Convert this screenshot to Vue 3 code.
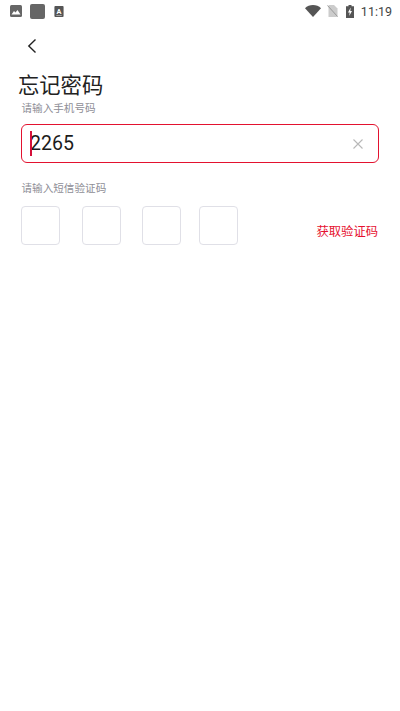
<script setup>
const boxes = [0, 1, 2, 3]
</script>

<template>
  <div class="page">
    <div class="status">
      <div class="status-left">
        <svg class="ic-img" viewBox="0 0 12 12"><rect width="12" height="12" rx="1.5" fill="#666"/><path d="M1.5 9.5 4 6l1.5 1.6L7.5 5l3 4.500z" fill="#fff"/></svg>
        <span class="ic-square"></span>
        <svg class="ic-a" viewBox="0 0 10 12"><rect width="10" height="12" rx="1" fill="#555"/><text x="5" y="8.500" text-anchor="middle" class="ic-a-text">A</text><rect x="2" y="10" width="6" height="0.800" fill="#bbb"/></svg>
      </div>
      <div class="status-right">
        <svg class="ic-wifi" viewBox="0 0 16 12"><path d="M0 3.200C2 1.200 5 0 8 0s6 1.200 8 3.200L8 12z" fill="#555"/></svg>
        <svg class="ic-sim" viewBox="0 0 10 12"><path d="M1 0h5.500L10 3.500V12H1z" fill="#ccc"/><path d="M0 .5 10 11.500" stroke="#999" stroke-width="1"/></svg>
        <svg class="ic-batt" viewBox="0 0 8 13"><path d="M2.500 0h3v1.300H8V13H0V1.300h2.500z" fill="#555"/><path d="M4.700 2.500 2 7.500h1.700L3.200 11 6 6H4.300z" fill="#fff"/></svg>
        <span class="clock">11:19</span>
      </div>
    </div>

    <div class="nav">
      <svg class="back" viewBox="0 0 10 16"><path d="M8.500 1.500 1.800 8l6.700 6.500" fill="none" stroke="#222" stroke-width="1.400"/></svg>
    </div>

    <h1 class="title">忘记密码</h1>
    <div class="label first">请输入手机号码</div>

    <div class="input">
      <span class="caret"></span>
      <span class="value">2265</span>
      <svg class="clear" viewBox="0 0 10 10"><path d="M.5.5l9 9M9.500.5l-9 9" stroke="#b8b8b8" stroke-width="1.100" fill="none"/></svg>
    </div>

    <div class="label second">请输入短信验证码</div>

    <div class="code-row">
      <div class="boxes">
        <span v-for="b in boxes" :key="b" class="box"></span>
      </div>
      <span class="get-code">获取验证码</span>
    </div>
  </div>
</template>

<style scoped>
.page {
  width: 400px;
  height: 711px;
  background: #fff;
  overflow: hidden;
  font-family: "Roboto", "Noto Sans CJK SC", sans-serif;
  box-sizing: border-box;
}
.status {
  height: 22px;
  display: flex;
  align-items: center;
  justify-content: space-between;
  padding: 0 8px 0 10px;
}
.status-left, .status-right {
  display: flex;
  align-items: center;
}
.ic-img { width: 12px; height: 12px; }
.ic-square {
  width: 15px;
  height: 15px;
  border-radius: 2px;
  background: #666;
  margin-left: 8px;
}
.ic-a { width: 10px; height: 11px; margin-left: 9px; }
.ic-a-text { font-size: 8px; font-weight: 700; fill: #fff; font-family: "Roboto", sans-serif; }
.ic-wifi { width: 16px; height: 12px; }
.ic-sim { width: 11px; height: 12px; margin-left: 6px; }
.ic-batt { width: 8px; height: 13px; margin-left: 8px; }
.clock { font-size: 12.5px; color: #444; margin-left: 7px; }
.nav {
  height: 48px;
  padding-left: 27px;
  display: flex;
  align-items: center;
}
.back { width: 10px; height: 16px; }
.title {
  margin: 0 0 0 18px;
  font-size: 21.3px;
  line-height: 32px;
  font-weight: 400;
  color: #222;
}
.label {
  margin-left: 21.5px;
  font-size: 10.6px;
  line-height: 14px;
  color: #8e8e96;
}
.first { margin-top: 0; }
.input {
  margin: 8px 21px 0;
  height: 39px;
  box-sizing: border-box;
  border: 1px solid #e3122f;
  border-radius: 6px;
  display: flex;
  align-items: center;
  padding: 0 15px 0 8px;
  position: relative;
}
.caret {
  width: 2px;
  height: 25px;
  background: #d5103a;
  position: absolute;
  left: 8px;
  top: 6px;
}
.value {
  font-size: 19.500px;
  color: #1c1c1c;
  flex: 1;
}
.clear { width: 10px; height: 10px; }
.second { margin-top: 19px; }
.code-row {
  margin: 10px 21px 0;
  display: flex;
  justify-content: space-between;
  align-items: center;
}
.boxes { display: flex; }
.box {
  width: 39px;
  height: 39px;
  box-sizing: border-box;
  border: 1px solid #e0e0e7;
  border-radius: 4px;
  margin-right: 22px;
}
.box:nth-child(2) { margin-right: 21px; }
.box:nth-child(3) { margin-right: 18px; }
.box:last-child { margin-right: 0; }
.get-code {
  font-size: 12.3px;
  color: #e6102f;
  margin-top: 11px;
  margin-right: 1px;
}
</style>
